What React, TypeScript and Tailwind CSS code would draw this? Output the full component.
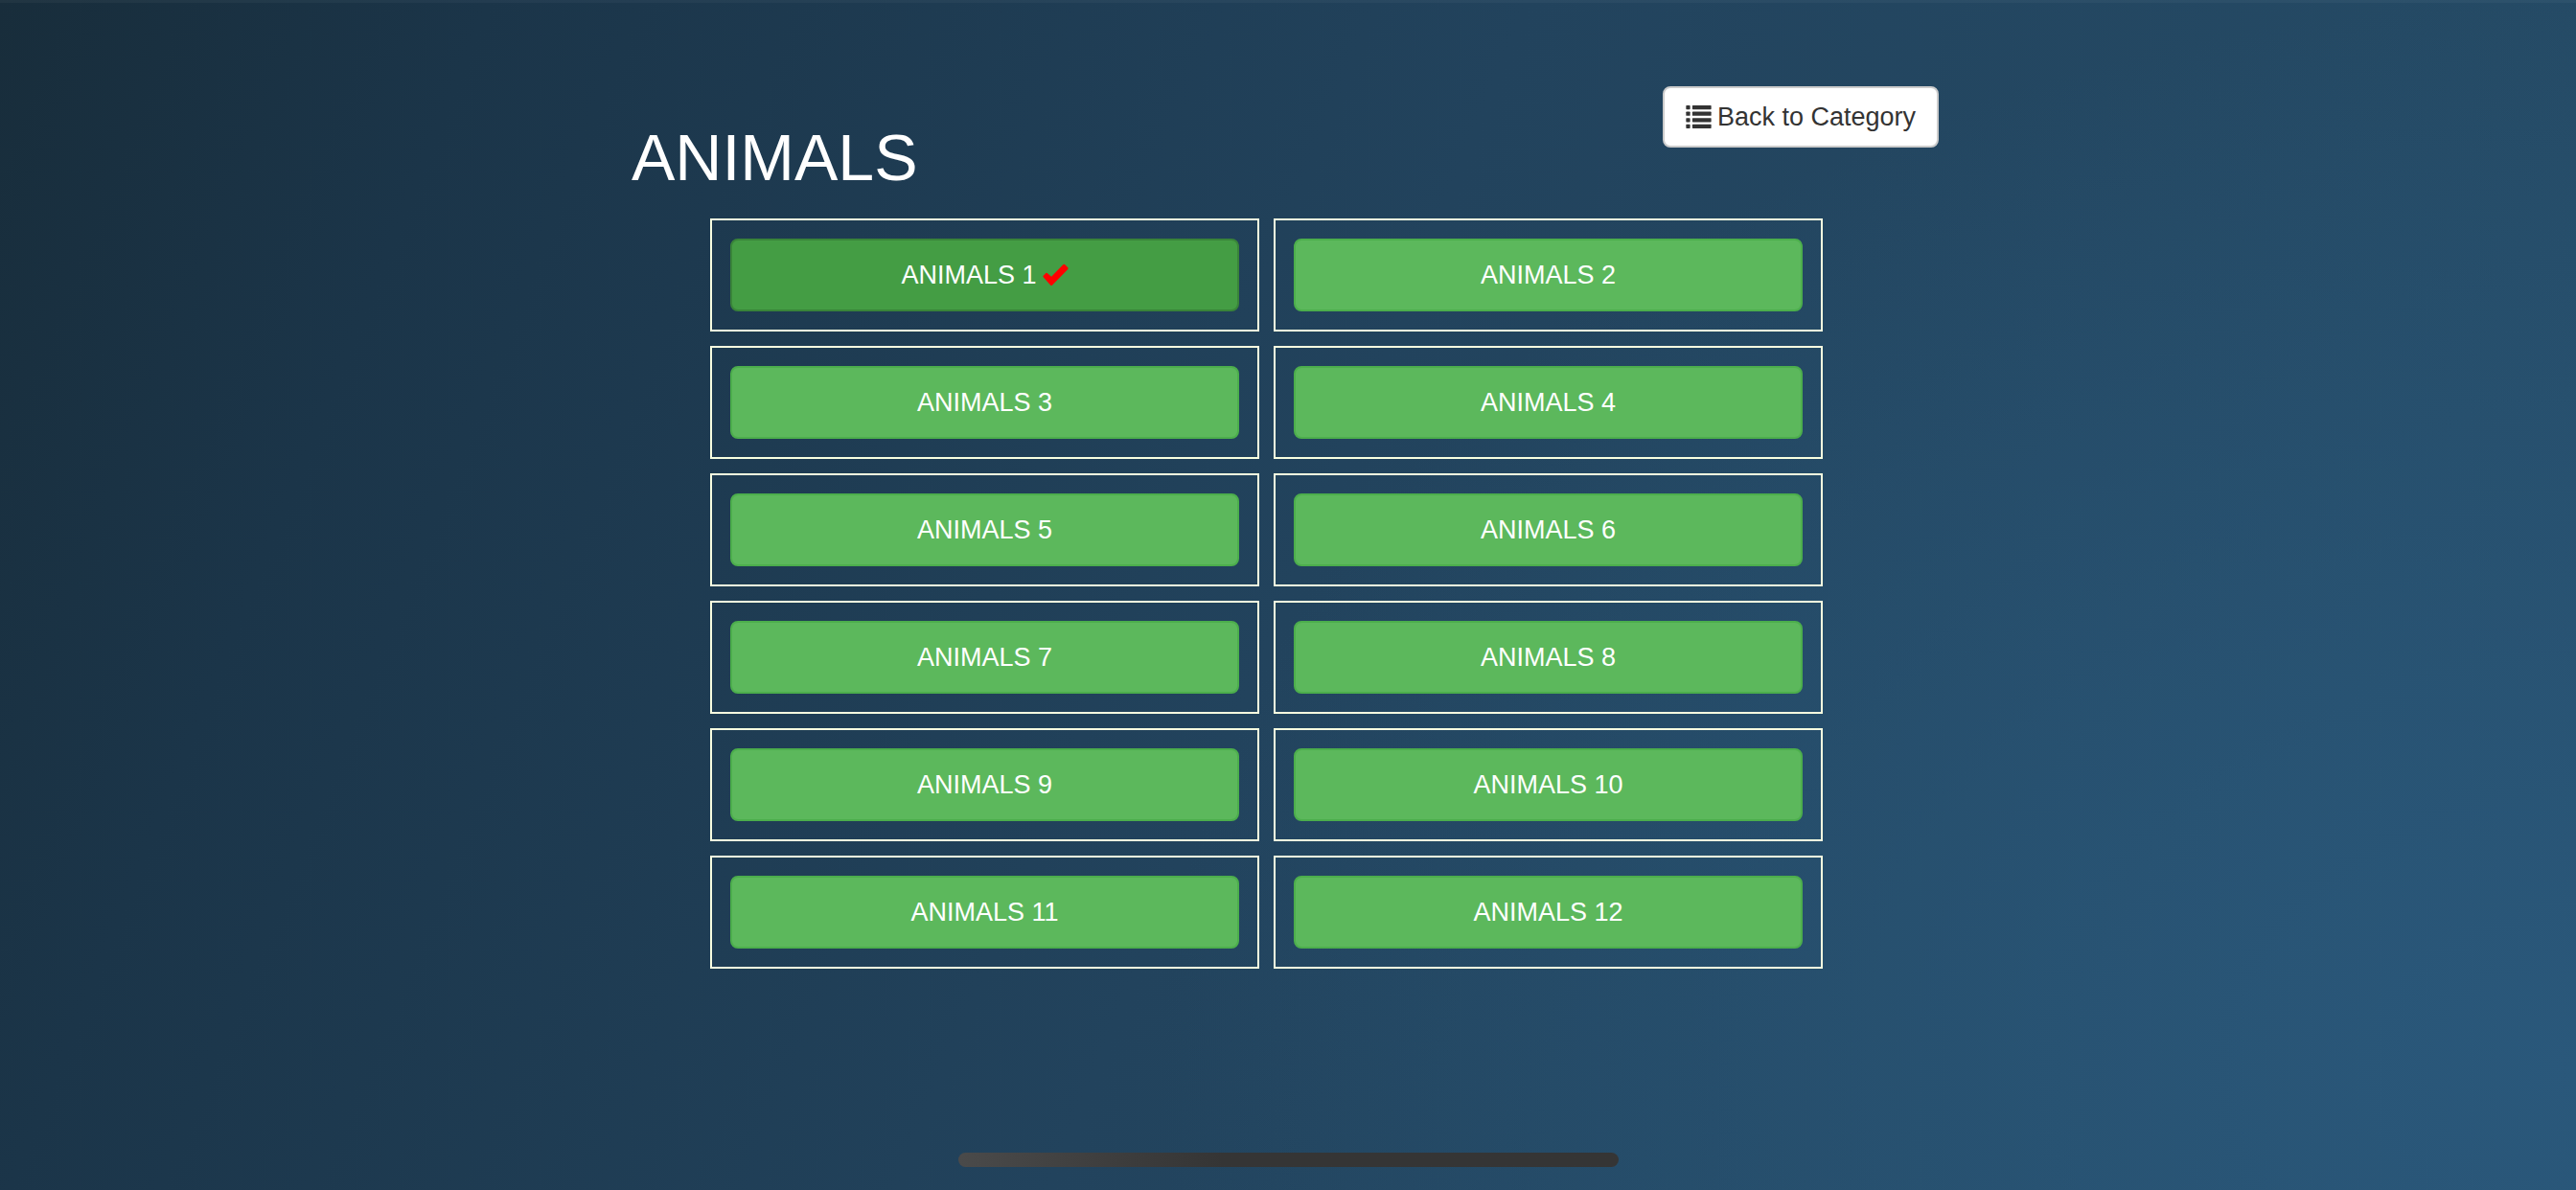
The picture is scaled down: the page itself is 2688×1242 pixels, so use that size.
type Quiz = {
  id: number;
  label: string;
  done?: boolean;
};

const CATEGORY = 'ANIMALS';

const quizzes: Quiz[] = Array.from({ length: 12 }, (_, i) => ({
  id: i + 1,
  label: `${CATEGORY} ${i + 1}`,
  done: i === 0,
}));

function ListIcon() {
  return (
    <svg viewBox="0 0 80 73" className="w-[27px] h-6 shrink-0" fill="currentColor" aria-hidden="true">
      {[0, 20, 40, 60].map((y) => (
        <g key={y}>
          <rect x="0" y={y} width="13" height="13" rx="2" />
          <rect x="20" y={y} width="60" height="13" rx="2" />
        </g>
      ))}
    </svg>
  );
}

function CheckIcon() {
  return (
    <svg viewBox="0 0 80 68" className="w-[27px] h-6 shrink-0 text-[#ff0000]" fill="currentColor" aria-label="Completed">
      <path d="M2 36 L10 28 Q12 26 14 28 L27 39 L63 2 Q66 -1 69 2 L78 11 Q80 13 78 16 L30 65 Q27 68 24 65 L2 41 Q0 38 2 36 Z" />
    </svg>
  );
}

function QuizCard({ quiz }: { quiz: Quiz }) {
  return (
    <li className="border-2 border-[#f8ffe0] p-[19px]">
      <button
        type="button"
        className={`flex w-full h-[76px] items-center justify-center gap-1.5 rounded-lg border-2 text-[27px] leading-9 text-white ${
          quiz.done ? 'bg-[#449d44] border-[#398439]' : 'bg-[#5cb85c] border-[#4cae4c]'
        }`}
      >
        {quiz.label}
        {quiz.done && <CheckIcon />}
      </button>
    </li>
  );
}

export default function App() {
  return (
    <main className="flex min-h-screen flex-col bg-[radial-gradient(ellipse_55%_90%_at_100%_90%,#2a587b,transparent),linear-gradient(112deg,#182d3b,#1b3549_16%,#22435d_50%,#254b66_86%,#264d69)] font-['Liberation_Sans',Arial,sans-serif] shadow-[inset_0_3px_0_rgba(255,255,255,0.04)]">
      <div className="mx-auto w-full max-w-[1426px] grow px-7">
        {/* Header */}
        <header className="flex items-start justify-between pt-[90px] pr-1.5">
          <h1 className="pt-9 text-[68px] leading-[76px] text-white">{CATEGORY}</h1>
          <button
            type="button"
            className="flex h-16 items-center gap-1.5 rounded-lg border-2 border-[#cccccc] bg-white px-[22px] text-[27px] leading-9 text-[#333333]"
          >
            <ListIcon />
            Back to Category
          </button>
        </header>

        {/* Quiz list */}
        <ul className="mt-[26px] grid grid-cols-2 gap-[15px] pl-[82px] pr-[127px]">
          {quizzes.map((quiz) => (
            <QuizCard key={quiz.id} quiz={quiz} />
          ))}
        </ul>
      </div>

      {/* Home indicator */}
      <div className="mx-auto mb-6 h-[15px] w-full max-w-[689px] rounded-full bg-linear-to-r from-[#4a4a4a] via-[#353535] via-40% to-[#353535]" />
    </main>
  );
}
